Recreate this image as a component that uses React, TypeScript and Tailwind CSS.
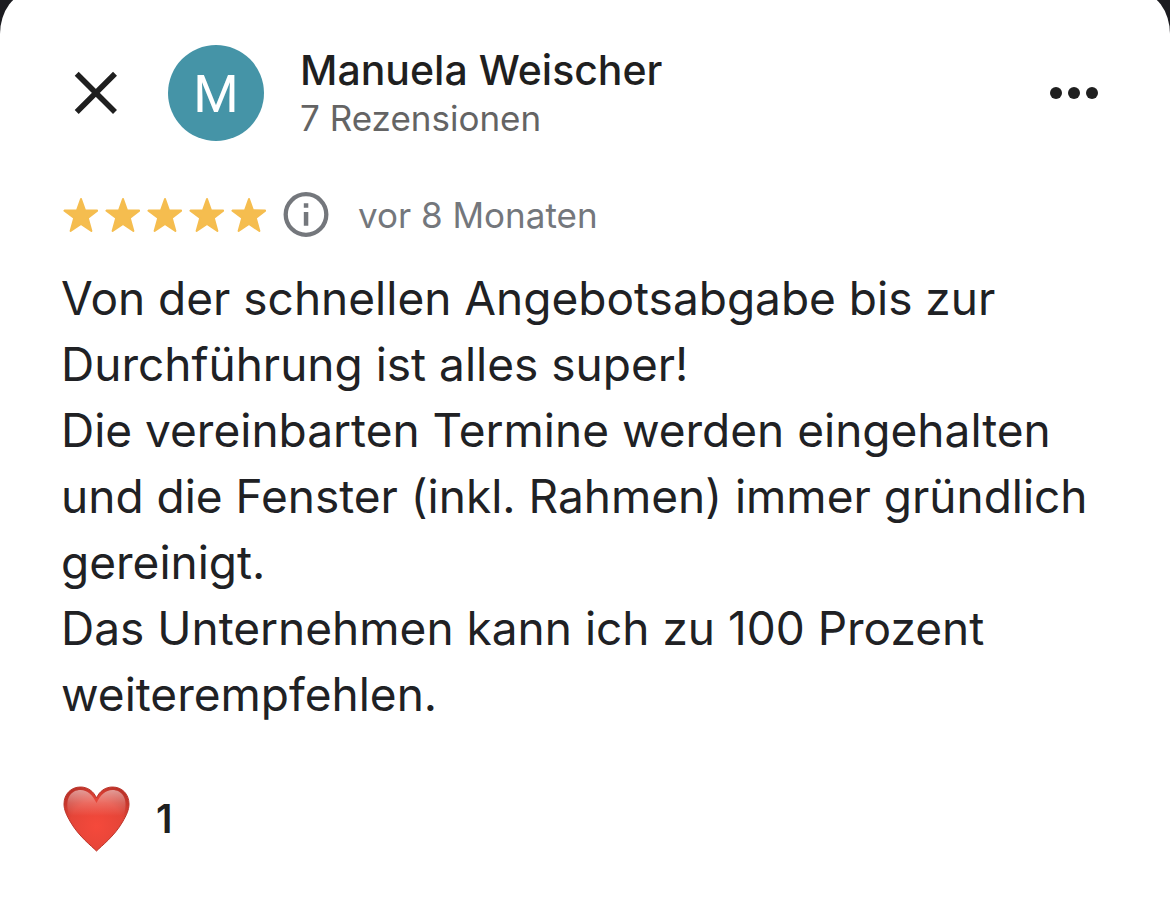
import type { ReactNode } from 'react';

interface Review {
  author: string;
  reviewCount: number;
  rating: number;
  age: string;
  paragraphs: string[];
  likes: number;
}

const review: Review = {
  author: 'Manuela Weischer',
  reviewCount: 7,
  rating: 5,
  age: 'vor 8 Monaten',
  paragraphs: [
    'Von der schnellen Angebotsabgabe bis zur Durchführung ist alles super!',
    'Die vereinbarten Termine werden eingehalten und die Fenster (inkl. Rahmen) immer gründlich gereinigt.',
    'Das Unternehmen kann ich zu 100 Prozent weiterempfehlen.',
  ],
  likes: 1,
};

function IconButton({ label, children }: { label: string; children: ReactNode }) {
  return (
    <button type="button" aria-label={label} className="shrink-0 cursor-pointer text-[#1f1f1f]">
      {children}
    </button>
  );
}

function CloseIcon() {
  return (
    <svg className="size-12" viewBox="0 0 48 48" fill="none" stroke="currentColor" strokeWidth="5.6">
      <path d="M4.700 4.700 43 43M43 4.700 4.700 43" />
    </svg>
  );
}

function MoreIcon() {
  return (
    <svg className="size-12" viewBox="0 0 48 48" fill="currentColor">
      <circle cx="6" cy="24" r="6" />
      <circle cx="24" cy="24" r="6" />
      <circle cx="42" cy="24" r="6" />
    </svg>
  );
}

function StarIcon() {
  return (
    <svg
      className="size-9"
      viewBox="-1 2 36 36"
      fill="#f5bd4f"
      stroke="#f5bd4f"
      strokeWidth="2"
      strokeLinejoin="round"
    >
      <path d="M18 4 22 15.300 34.200 15.600 24.800 23 28.400 36 18 29 7.600 36 11.200 23 1.500 15.600 14 15.300Z" />
    </svg>
  );
}

function InfoIcon() {
  return (
    <svg className="size-12" viewBox="0 0 48 48" fill="none">
      <circle cx="24" cy="23.500" r="20.300" stroke="#74777c" strokeWidth="4.300" />
      <path d="M21.800 12.300h4.500v4.500h-4.500zM21.800 21h4.500v13.700h-4.500z" fill="#74777c" />
    </svg>
  );
}

function HeartIcon() {
  return (
    <svg className="h-[66px] w-[68px]" viewBox="-1.500 0 68 66">
      <defs>
        <radialGradient id="heart-fill" cx="33" cy="40" r="44" gradientUnits="userSpaceOnUse">
          <stop offset="0" stopColor="#f5493b" />
          <stop offset="0.6" stopColor="#e54538" />
          <stop offset="1" stopColor="#b93027" />
        </radialGradient>
        <linearGradient id="heart-shine" x1="0" y1="4" x2="0" y2="30" gradientUnits="userSpaceOnUse">
          <stop offset="0" stopColor="#fff" stopOpacity="0.5" />
          <stop offset="0.5" stopColor="#fff" stopOpacity="0.2" />
          <stop offset="1" stopColor="#fff" stopOpacity="0" />
        </linearGradient>
      </defs>
      <path
        d="M33 65C28 60 15 50 7 36C3 29 .5 24 .5 18C.5 8 7.500 1 17 1C24 1 30 5 33 12C36 5 42 1 49 1C58.500 1 65.500 8 65.500 18C65.500 24 63 29 59 36C51 50 38 60 33 65Z"
        fill="url(#heart-fill)"
        stroke="#bb352b"
        strokeWidth="1"
      />
      <path
        d="M6 30C0 12 8 4 17 4C24 4 29 9 33 17C37 9 42 4 49 4C58 4 66 12 60 30Z"
        fill="url(#heart-shine)"
      />
    </svg>
  );
}

export default function App() {
  return (
    <div className="min-h-screen overflow-hidden bg-[#1c1c20] font-['Inter',sans-serif]">
      <article className="-mt-2 min-h-[calc(100vh+8px)] rounded-t-[32px_42px] bg-white px-[61px] pt-[53px] text-[#1f1f1f]">
        <header className="flex items-center px-[11px]">
          <IconButton label="Schließen">
            <CloseIcon />
          </IconButton>
          <div className="ml-12 flex size-24 shrink-0 items-center justify-center rounded-full bg-[#4594a7] pt-1 font-['Roboto',sans-serif] text-[52px] text-white">
            M
          </div>
          <div className="ml-9 flex-1">
            <h1 className="text-[41px] leading-[50px] font-medium">{review.author}</h1>
            <p className="text-[35px] leading-[46px] text-[#646464]">{review.reviewCount} Rezensionen</p>
          </div>
          <IconButton label="Weitere Optionen">
            <MoreIcon />
          </IconButton>
        </header>

        <div className="mt-[50px] flex items-center pl-px">
          <div className="flex gap-[6px]" role="img" aria-label="5 von 5 Sternen">
            {Array.from({ length: review.rating }, (_, i) => (
              <StarIcon key={i} />
            ))}
          </div>
          <button type="button" aria-label="Informationen" className="ml-4 cursor-pointer">
            <InfoIcon />
          </button>
          <p className="ml-7 text-[35px] leading-[46px] text-[#74777c]">{review.age}</p>
        </div>

        <div className="mt-[26px] text-[46px] leading-[66px] text-[#202124]">
          {review.paragraphs.map((text) => (
            <p key={text}>{text}</p>
          ))}
        </div>

        <button
          type="button"
          aria-label="Gefällt mir"
          className="mt-[59px] flex cursor-pointer items-center gap-[26px] pl-px"
        >
          <HeartIcon />
          <span className="text-[39px] font-semibold">{review.likes}</span>
        </button>
      </article>
    </div>
  );
}
